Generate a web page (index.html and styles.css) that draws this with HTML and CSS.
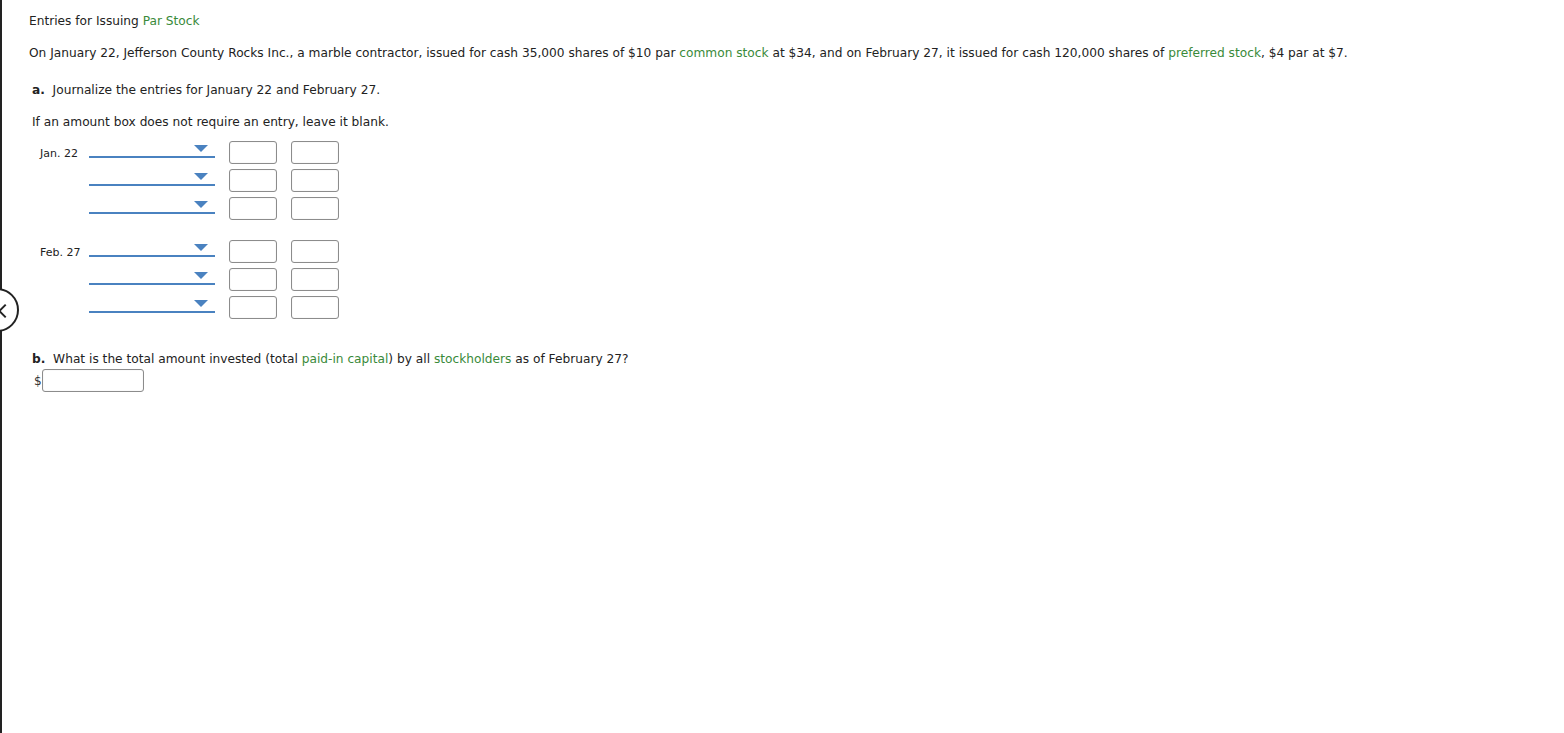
FILE: index.html
```html
<!DOCTYPE html>
<html>
<head>
<meta charset="utf-8">
<link rel="stylesheet" href="styles.css">
</head>
<body>
<div class="page">
  <div class="title">Entries for Issuing <span class="term">Par Stock</span></div>
  <p class="para">On January 22, Jefferson County Rocks Inc., a marble contractor, issued for cash 35,000 shares of $10 par <span class="term">common stock</span> at $34, and on February 27, it issued for cash 120,000 shares of <span class="term">preferred stock</span>, $4 par at $7.</p>
  <p class="q"><b>a.</b>&nbsp; Journalize the entries for January 22 and February 27.</p>
  <p class="note">If an amount box does not require an entry, leave it blank.</p>

  <div class="journal">
    <div class="group">
      <div class="date">Jan. 22</div>
      <div class="rows">
        <div class="row"><div class="select"><span class="tri"></span></div><div class="box"></div><div class="box"></div></div>
        <div class="row"><div class="select"><span class="tri"></span></div><div class="box"></div><div class="box"></div></div>
        <div class="row"><div class="select"><span class="tri"></span></div><div class="box"></div><div class="box"></div></div>
      </div>
    </div>
    <div class="group">
      <div class="date">Feb. 27</div>
      <div class="rows">
        <div class="row"><div class="select"><span class="tri"></span></div><div class="box"></div><div class="box"></div></div>
        <div class="row"><div class="select"><span class="tri"></span></div><div class="box"></div><div class="box"></div></div>
        <div class="row"><div class="select"><span class="tri"></span></div><div class="box"></div><div class="box"></div></div>
      </div>
    </div>
  </div>

  <p class="q qb"><b>b.</b>&nbsp; What is the total amount invested (total <span class="term">paid-in capital</span>) by all <span class="term">stockholders</span> as of February 27?</p>
  <div class="answer"><span class="dollar">$</span><div class="box wide"></div></div>
</div>
<div class="navcircle"><span class="chev"></span></div>
</body>
</html>
```
FILE: styles.css
```css
html, body {
  margin: 0;
  padding: 0;
  background: #fff;
}
body {
  font-family: "DejaVu Sans", Verdana, sans-serif;
  color: #222;
  font-size: 12.2px;
}
.page {
  border-left: 2px solid #222;
  min-height: 733px;
  box-sizing: border-box;
  padding: 13px 0 0 27px;
}
.term { color: #3a8a3a; }
.title { line-height: 16px; }
.para { margin: 16px 0 0; line-height: 16px; }
.q { margin: 21px 0 0 3px; line-height: 16px; }
.note { margin: 16px 0 0 3px; line-height: 16px; }
.journal { margin-top: 11px; }
.group { display: flex; align-items: flex-start; margin-bottom: 20px; }
.group:last-child { margin-bottom: 0; }
.date {
  font-size: 11px;
  width: 49px;
  padding-left: 11px;
  padding-top: 6px;
  line-height: 13px;
}
.rows { display: flex; flex-direction: column; gap: 5px; }
.row { display: flex; align-items: flex-start; gap: 14px; }
.select {
  width: 126px;
  height: 15px;
  border-bottom: 2px solid #4a82c0;
  position: relative;
}
.tri {
  position: absolute;
  right: 7px;
  top: 4px;
  width: 0; height: 0;
  border-left: 7px solid transparent;
  border-right: 7px solid transparent;
  border-top: 7px solid #4a82c0;
}
.box {
  width: 46px;
  height: 21px;
  border: 1px solid #8c8c8c;
  border-radius: 3px;
  box-shadow: inset 0 0 1px #ccc;
  background: #fff;
}
.qb { margin-top: 32px; }
.answer { display: flex; align-items: flex-start; margin: 2px 0 0 5px; }
.dollar { font-size: 12px; line-height: 14px; padding-top: 5px; color: #333; }
.box.wide { width: 100px; }
.navcircle {
  position: absolute;
  left: -25px;
  top: 288px;
  width: 44px;
  height: 44px;
  border: 2px solid #222;
  border-radius: 50%;
  background: #fff;
  box-sizing: border-box;
}
.chev {
  position: absolute;
  left: 23px;
  top: 16px;
  width: 8px;
  height: 8px;
  border-left: 2px solid #222;
  border-bottom: 2px solid #222;
  transform: rotate(45deg);
}
```
